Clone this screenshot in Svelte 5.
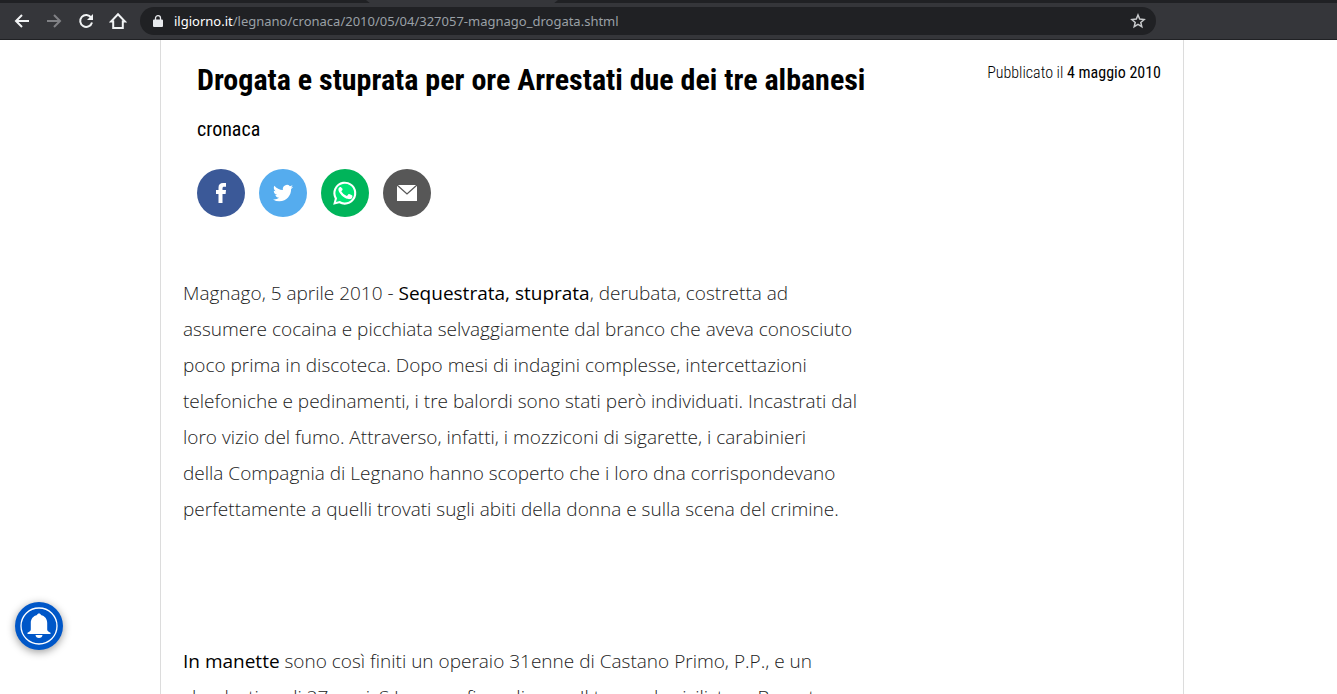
<script>
  const url = {
    host: "ilgiorno.it",
    path: "/legnano/cronaca/2010/05/04/327057-magnago_drogata.shtml",
  };

  // each paragraph opens with an optional plain lead and a bold part
  const paragraphs = [
    {
      lead: "Magnago, 5 aprile 2010 - ",
      strong: "Sequestrata, stuprata",
      lines: [
        ", derubata, costretta ad",
        "assumere cocaina e picchiata selvaggiamente dal branco che aveva conosciuto",
        "poco prima in discoteca. Dopo mesi di indagini complesse, intercettazioni",
        "telefoniche e pedinamenti, i tre balordi sono stati però individuati. Incastrati dal",
        "loro vizio del fumo. Attraverso, infatti, i mozziconi di sigarette, i carabinieri",
        "della Compagnia di Legnano hanno scoperto che i loro dna corrispondevano",
        "perfettamente a quelli trovati sugli abiti della donna e sulla scena del crimine.",
      ],
    },
    {
      lead: "",
      strong: "In manette",
      lines: [
        " sono così finiti un operaio 31enne di Castano Primo, P.P., e un",
        "clandestino di 27 anni, S.I., senza fissa dimora. Il terzo, da civilista, a Bernate",
      ],
    },
  ];
</script>

<div class="page">
  <header class="browser">
    <div class="tabs"><span class="tab"></span></div>
    <div class="toolbar">
      <button aria-label="Indietro">
        <svg width="16" height="16" viewBox="0 0 16 16"><path d="M15 8H2M8 2L2 8l6 6" fill="none" stroke="#f1f3f4" stroke-width="2" /></svg>
      </button>
      <button aria-label="Avanti" disabled>
        <svg width="16" height="16" viewBox="0 0 16 16"><path d="M1 8h13M8 2l6 6-6 6" fill="none" stroke="#808185" stroke-width="2" /></svg>
      </button>
      <button aria-label="Ricarica">
        <svg width="16" height="16" viewBox="0 0 16 16">
          <path d="M13.2 4.6A6 6 0 1 0 14 9.500" fill="none" stroke="#f1f3f4" stroke-width="2" />
          <path d="M15 1v6H9z" fill="#f1f3f4" />
        </svg>
      </button>
      <button aria-label="Pagina iniziale">
        <svg width="18" height="18" viewBox="0 0 18 18"><path d="M2 9.500h2.200V16h9.600V9.500H16L9 2.200z" fill="none" stroke="#f1f3f4" stroke-width="2" /></svg>
      </button>
      <div class="address">
        <svg width="10" height="12" viewBox="0 0 10 12">
          <path d="M1 4.500h8a1 1 0 0 1 1 1V11a1 1 0 0 1-1 1H1a1 1 0 0 1-1-1V5.500a1 1 0 0 1 1-1z" fill="#e8eaed" />
          <path d="M2.500 5V3a2.500 2.300 0 0 1 5 0v2" fill="none" stroke="#e8eaed" stroke-width="1.300" />
        </svg>
        <span class="url"><b>{url.host}</b>{url.path}</span>
        <button class="star" aria-label="Aggiungi ai preferiti">
          <svg width="16" height="16" viewBox="0 0 16 16"><path d="M8 2l1.700 4.100 4.400.4-3.300 2.900 1 4.300L8 11.400l-3.800 2.300 1-4.300-3.300-2.900 4.400-.4z" fill="none" stroke="#c8cacc" stroke-width="1.500" /></svg>
        </button>
      </div>
    </div>
  </header>

  <main>
    <div class="head">
      <div class="titles">
        <h1>Drogata e stuprata per ore Arrestati due dei tre albanesi</h1>
        <h2>cronaca</h2>
        <div class="share">
          <a href="#facebook" class="facebook" aria-label="Facebook">
            <svg width="48" height="48" viewBox="0 0 48 48"><path d="M21.500 34V25H19v-4h2.500v-2.300c0-3.200 1.600-4.700 4.600-4.700H29v3.700h-1.800c-1.300 0-1.700.5-1.700 1.600V21H29l-.4 4h-3.100v9z" fill="#fff" /></svg>
          </a>
          <a href="#twitter" class="twitter" aria-label="Twitter">
            <svg width="48" height="48" viewBox="0 0 48 48"><path transform="translate(14 14) scale(.84)" d="M23.950 4.570a10 10 0 0 1-2.820.770 4.960 4.960 0 0 0 2.160-2.720c-.950.550-2 .960-3.130 1.180a4.920 4.920 0 0 0-8.380 4.480C7.690 8.090 4.070 6.130 1.640 3.160a4.820 4.820 0 0 0-.670 2.480c0 1.710.870 3.210 2.190 4.100a4.900 4.900 0 0 1-2.230-.620v.060a4.920 4.920 0 0 0 3.950 4.830 4.960 4.960 0 0 1-2.210.080 4.940 4.940 0 0 0 4.600 3.420A9.870 9.870 0 0 1 0 19.540a13.990 13.990 0 0 0 7.550 2.210c9.050 0 14-7.500 14-13.980 0-.210 0-.420-.020-.630a9.940 9.940 0 0 0 2.460-2.550z" fill="#fff" /></svg>
          </a>
          <a href="#whatsapp" class="whatsapp" aria-label="WhatsApp">
            <svg width="48" height="48" viewBox="0 0 48 48">
              <path d="M12.200 35.800l1.600-6a11.500 11.500 0 1 1 4.400 4.400z" fill="#fff" />
              <path d="M15 33l1-3.700a9.400 9.400 0 1 1 2.900 2.800z" fill="#00e676" />
              <path d="M20.300 18.500c-.3-.6-.5-.6-1-.6-.9 0-1.900 1.100-1.900 2.700 0 1.700 1.200 3.200 1.400 3.500.2.200 2.400 3.800 5.900 5.200 2.900 1.100 3.500.9 4.100.8.700-.1 2.100-.8 2.400-1.700.3-.8.300-1.500.2-1.700-.1-.200-2.800-1.500-3.200-1.600-.3-.1-.6-.1-.8.200l-1.200 1.400c-.2.200-.4.300-.8.100-2.700-1.200-4.100-2.900-4.900-4.300-.3-.4 0-.6.200-.8.400-.5.700-.8.900-1.300.1-.3 0-.5-.1-.7z" fill="#fff" />
            </svg>
          </a>
          <a href="#mail" class="mail" aria-label="E-mail">
            <svg width="48" height="48" viewBox="0 0 48 48">
              <path d="M14 16h20v16H14z" fill="#fff" />
              <path d="M14 16l10 9 10-9" fill="none" stroke="#575757" stroke-width="1.300" />
            </svg>
          </a>
        </div>
      </div>
      <p class="date">Pubblicato il <b>4 maggio 2010</b></p>
    </div>

    <article>
      {#each paragraphs as p}
        <p>
          {p.lead}<strong>{p.strong}</strong>{#each p.lines as line, i}{#if i > 0}<br />{/if}{line}{/each}
        </p>
      {/each}
    </article>
  </main>

  <button class="bell" aria-label="Notifiche">
    <svg width="48" height="48" viewBox="0 0 48 48">
      <circle cx="24" cy="24" r="18" fill="none" stroke="#fff" stroke-width="1.300" />
      <path d="M24 11.500c1 0 1.800.6 1.900 1.400 4 .9 6.300 4 6.300 8.100v6.500c0 1.500 1.200 2 3.300 3.300v1.200h-23v-1.200c2.100-1.300 3.300-1.800 3.300-3.300V21c0-4.100 2.300-7.200 6.300-8.100.1-.8.900-1.400 1.900-1.400zM20.500 33h7c-.2 2-1.500 3-3.500 3s-3.300-1-3.500-3z" fill="#fff" />
    </svg>
  </button>
</div>

<style>
  :global(body) {
    margin: 0;
    background: #fff;
  }
  .page {
    height: 100vh;
    overflow: hidden;
    display: flex;
    flex-direction: column;
    color: #000;
  }
  button {
    border: 0;
    padding: 0;
    background: none;
    cursor: pointer;
  }
  svg {
    display: block;
  }
  .browser {
    flex: none;
    background: #35363a;
    border-bottom: 1px solid #202124;
  }
  .tabs {
    height: 3px;
    background: #202124;
    display: flex;
  }
  .tab {
    width: 192px;
    margin-left: 366px;
    background: #35363a;
    clip-path: polygon(0 0, 100% 0, 98% 100%, 2% 100%);
    height: 3px;
  }
  .toolbar {
    height: 36px;
    display: flex;
    align-items: center;
    padding-left: 6px;
  }
  .toolbar > button {
    width: 32px;
    display: flex;
    justify-content: center;
  }
  .address {
    flex: 1;
    height: 28px;
    margin-left: 6px;
    margin-right: 181px;
    padding: 0 10px 0 13px;
    display: flex;
    align-items: center;
    border-radius: 14px;
    background: #202124;
  }
  .url {
    flex: 1;
    margin-left: 11px;
    font: 13px "Noto Sans", "Open Sans", sans-serif;
    color: #9aa0a6;
  }
  .url b {
    font-weight: 400;
    color: #fff;
  }
  main {
    flex: 1;
    margin: 0 153px 0 160px;
    border: solid #dcdcdc;
    border-width: 0 1px;
    overflow: hidden;
  }
  .head {
    display: flex;
    justify-content: space-between;
    padding: 20px 22px 0 36px;
    font-family: "Roboto Condensed", Roboto, sans-serif;
  }
  h1 {
    margin: 0;
    font-size: 30px;
    line-height: 40px;
    font-weight: 700;
  }
  h2 {
    margin: 14px 0 0;
    font-size: 20px;
    line-height: 30px;
    font-weight: 400;
  }
  .date {
    margin: 0;
    font-size: 16px;
    line-height: 26px;
    font-weight: 300;
  }
  .date b {
    font-weight: 400;
  }
  .share {
    display: flex;
    gap: 14px;
    margin-top: 25px;
  }
  .share a {
    border-radius: 50%;
  }
  .facebook {
    background: #3b5998;
  }
  .twitter {
    background: #55acee;
  }
  .whatsapp {
    background: #00b45a;
  }
  .mail {
    background: #575757;
  }
  article {
    padding: 58px 22px 0;
    font: 300 19px/36px "Open Sans", sans-serif;
    color: #222;
  }
  article p {
    margin: 0 0 116px;
    white-space: nowrap;
  }
  article strong {
    font-weight: 400;
    color: #000;
  }
  .bell {
    position: fixed;
    left: 15px;
    bottom: 44px;
    border-radius: 50%;
    background: #0057c8;
    box-shadow: 0 2px 8px rgba(0, 0, 0, 0.4);
  }
</style>
